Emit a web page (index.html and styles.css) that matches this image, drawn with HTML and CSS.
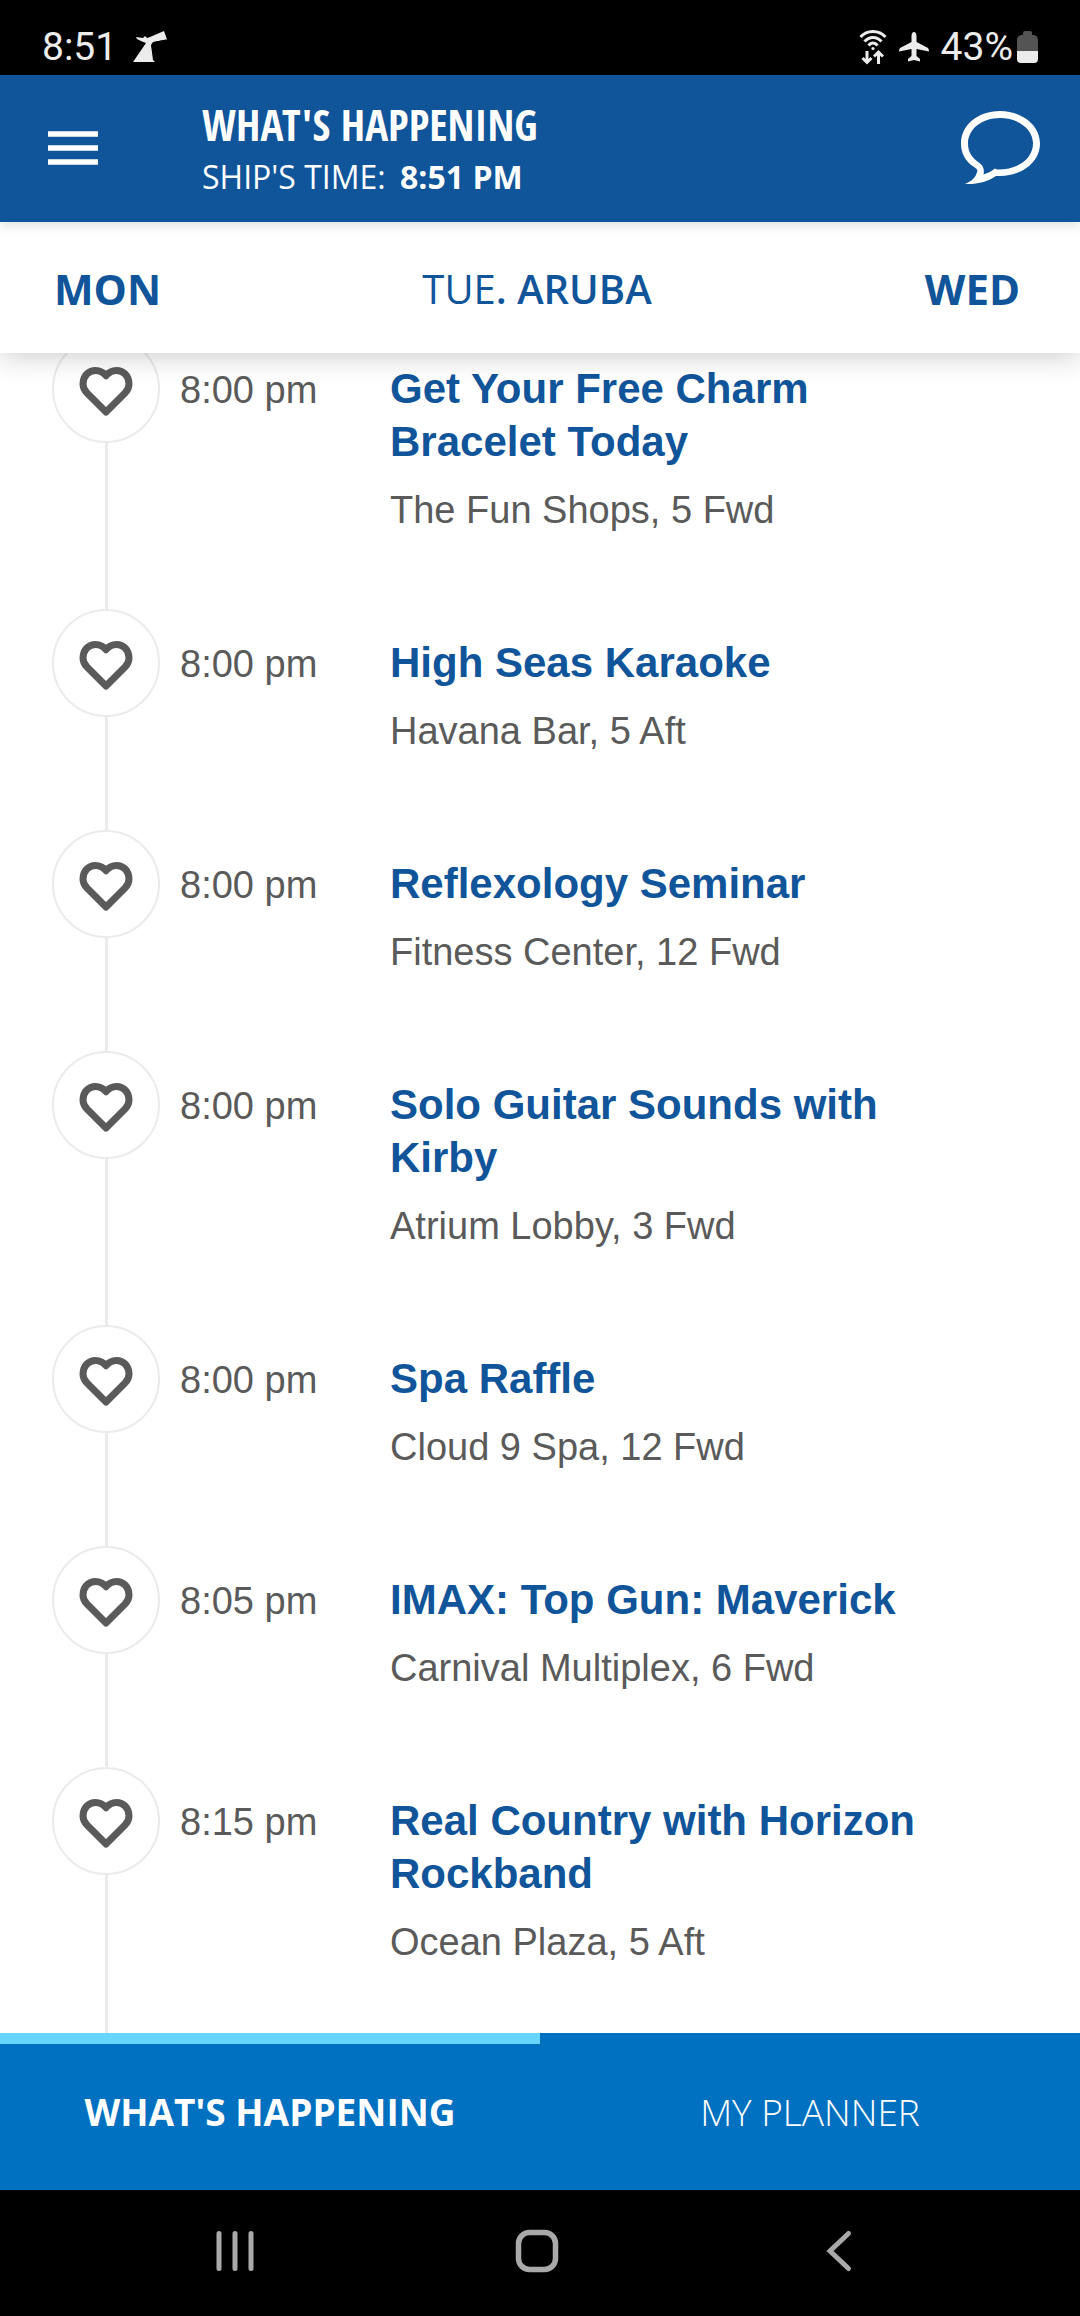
FILE: index.html
```html
<!DOCTYPE html>
<html lang="en">
  <head>
    <meta charset="UTF-8" />
    <meta name="viewport" content="width=device-width, initial-scale=1" />
    <title>What's Happening</title>
    <link rel="stylesheet" href="styles.css">
  </head>
  <body>
    <svg class="sprite" aria-hidden="true">
      <symbol id="heart" viewBox="0 0 54 52">
        <path d="M27 46 L8 27 C5.5 24.5 4 21.5 4 18 C4 10 9.5 4.5 16.500 4.500 C20.500 4.500 24.500 6.500 27 9.700 C29.500 6.500 33.500 4.500 37.500 4.500 C44.500 4.500 50 10 50 18 C50 21.500 48.500 24.500 46 27 Z" fill="none" stroke="#5a5a5a" stroke-width="7" stroke-linejoin="round" />
      </symbol>
    </svg>

    <div class="status-bar">
      <span>8:51</span>
      <svg class="funnel" width="35" height="32" viewBox="0 0 35 32">
        <path d="M0 31 L13 12 L9 10.500 L4 8 L3 6 L10 7 L12 5 L14 7 L17 6 L31 0 L34 8.500 L20 11 L18 14 L20 29 L22 31 Z" fill="#ececec" />
        <path d="M33 9 L21 11.500 L19 15 L21.500 30" fill="none" stroke="#000" stroke-width="1" />
      </svg>
      <div class="status-icons">
        <svg width="28" height="36" viewBox="0 0 28 36" fill="none" stroke="#ececec" stroke-width="3">
          <path d="M1.500 8 C8 0.500 20 0.500 26.500 8" />
          <path d="M5.500 12.500 C10 7 18 7 22.500 12.500" />
          <path d="M9.500 16.500 C12 13.200 16 13.200 18.500 16.500" />
          <circle cx="14" cy="19.500" r="1.600" fill="#ececec" stroke="none" />
          <path d="M8 22 V33 M3.500 29 L8 33.500 L12.500 29 M19.500 35 V24 M15 27.500 L19.500 23 L24 27.500" />
        </svg>
        <svg width="30" height="30" viewBox="0 0 30 30">
          <path d="M15 0 C16.500 0 17.500 2 17.500 4 V10 L29 16 Q30 17 30 19.500 L17.500 17 V24 L21 27 V29.500 L15 28 L9 29.500 V27 L12.500 24 V17 L0 19.500 Q0 17 1 16 L12.500 10 V4 C12.500 2 13.500 0 15 0 Z" fill="#ececec" />
        </svg>
        <span>43%</span>
        <svg class="battery" width="21" height="32" viewBox="0 0 21 32">
          <path d="M6 4 V2 Q6 0 8 0 H13 Q15 0 15 2 V4 H17 Q21 5 21 9 V20 H0 V9 Q0 5 4 4 Z" fill="#545454" />
          <path d="M0 20 H21 V28 Q21 32 17 32 H4 Q0 32 0 28 Z" fill="#ececec" />
        </svg>
      </div>
    </div>

    <header class="app-header">
      <button class="icon-button" aria-label="Menu">
        <svg width="50" height="34" viewBox="0 0 50 34">
          <path d="M0 3 H50 M0 17 H50 M0 31 H50" stroke="#fff" stroke-width="5.500" />
        </svg>
      </button>
      <div class="heading">
        <h1>WHAT'S HAPPENING</h1>
        <p>SHIP'S TIME: <strong>8:51 PM</strong></p>
      </div>
      <button class="icon-button" aria-label="Chat">
        <svg width="80" height="74" viewBox="0 0 80 74">
          <path fill-rule="evenodd" fill="#fff" d="M40 0 C62 0 80 14 80 32.500 C80 51 62 65 40 65 H36 C28 70.500 18 73.500 5 73 C12 70 16 66 17 61 C18 59 17 58 14 56 C5 50 1 42 1 32.500 C1 14 18 0 40 0 Z M40 7 C22 7 8 18 8 32.500 C8 41 12 47 19.500 52 C23.500 55 24.500 59 23.500 63.500 C28 62 32 60 35 57.500 L37 58.500 C58 59 73 47.500 73 32.500 C73 18 58 7 40 7 Z" />
        </svg>
      </button>
    </header>

    <nav class="days">
      <a href="#mon">MON</a>
      <a href="#tue" class="current"><span>TUE</span>. ARUBA</a>
      <a href="#wed">WED</a>
    </nav>

    <main class="schedule">
      <ul class="events">
        <li class="event">
          <div class="rail">
            <button class="like" aria-label="Like Get Your Free Charm Bracelet Today"><svg width="54" height="52"><use href="#heart" /></svg></button>
          </div>
          <time>8:00 pm</time>
          <div class="details">
            <h2>Get Your Free Charm Bracelet Today</h2>
            <p>The Fun Shops, 5 Fwd</p>
          </div>
        </li>
        <li class="event">
          <div class="rail">
            <button class="like" aria-label="Like High Seas Karaoke"><svg width="54" height="52"><use href="#heart" /></svg></button>
          </div>
          <time>8:00 pm</time>
          <div class="details">
            <h2>High Seas Karaoke</h2>
            <p>Havana Bar, 5 Aft</p>
          </div>
        </li>
        <li class="event">
          <div class="rail">
            <button class="like" aria-label="Like Reflexology Seminar"><svg width="54" height="52"><use href="#heart" /></svg></button>
          </div>
          <time>8:00 pm</time>
          <div class="details">
            <h2>Reflexology Seminar</h2>
            <p>Fitness Center, 12 Fwd</p>
          </div>
        </li>
        <li class="event">
          <div class="rail">
            <button class="like" aria-label="Like Solo Guitar Sounds with Kirby"><svg width="54" height="52"><use href="#heart" /></svg></button>
          </div>
          <time>8:00 pm</time>
          <div class="details">
            <h2>Solo Guitar Sounds with Kirby</h2>
            <p>Atrium Lobby, 3 Fwd</p>
          </div>
        </li>
        <li class="event">
          <div class="rail">
            <button class="like" aria-label="Like Spa Raffle"><svg width="54" height="52"><use href="#heart" /></svg></button>
          </div>
          <time>8:00 pm</time>
          <div class="details">
            <h2>Spa Raffle</h2>
            <p>Cloud 9 Spa, 12 Fwd</p>
          </div>
        </li>
        <li class="event">
          <div class="rail">
            <button class="like" aria-label="Like IMAX: Top Gun: Maverick"><svg width="54" height="52"><use href="#heart" /></svg></button>
          </div>
          <time>8:05 pm</time>
          <div class="details">
            <h2>IMAX: Top Gun: Maverick</h2>
            <p>Carnival Multiplex, 6 Fwd</p>
          </div>
        </li>
        <li class="event">
          <div class="rail">
            <button class="like" aria-label="Like Real Country with Horizon Rockband"><svg width="54" height="52"><use href="#heart" /></svg></button>
          </div>
          <time>8:15 pm</time>
          <div class="details">
            <h2>Real Country with Horizon Rockband</h2>
            <p>Ocean Plaza, 5 Aft</p>
          </div>
        </li>
      </ul>
    </main>

    <nav class="tabs">
      <a href="#happening" class="active">WHAT'S HAPPENING</a>
      <a href="#planner">MY PLANNER</a>
    </nav>

    <div class="system-nav">
      <button aria-label="Recent apps">
        <svg width="44" height="44" viewBox="0 0 44 44">
          <path d="M6 4.500 V39.500 M22 4.500 V39.500 M38 4.500 V39.500" stroke="#a9a9a9" stroke-width="5" stroke-linecap="round" />
        </svg>
      </button>
      <button aria-label="Home">
        <svg width="44" height="44" viewBox="0 0 44 44">
          <rect x="3.500" y="3.500" width="37" height="37" rx="11" fill="none" stroke="#a9a9a9" stroke-width="5.500" />
        </svg>
      </button>
      <button aria-label="Back">
        <svg width="44" height="44" viewBox="0 0 44 44">
          <path d="M31.500 4.500 L13 22 L31.500 39.500" fill="none" stroke="#a9a9a9" stroke-width="5" stroke-linecap="round" />
        </svg>
      </button>
    </div>
  </body>
</html>
```
FILE: styles.css
```css
* {
  box-sizing: border-box;
}

body {
  margin: 0;
  height: 100vh;
  display: flex;
  flex-direction: column;
  background: #fff;
  font-family: "Open Sans", sans-serif;
}

h1,
h2,
p,
ul {
  margin: 0;
  padding: 0;
}

button {
  padding: 0;
  border: none;
  background: none;
  cursor: pointer;
}

a {
  text-decoration: none;
}

svg {
  display: block;
}

.sprite {
  display: none;
}

/* status bar */
.status-bar {
  display: flex;
  align-items: center;
  gap: 16px;
  height: 75px;
  padding: 18px 42px 0 42px;
  background: #000;
  color: #ececec;
  font-family: Roboto, sans-serif;
  font-size: 39px;
  font-weight: 400;
}

.status-icons {
  display: flex;
  align-items: center;
  gap: 12px;
  margin-left: auto;
}

.battery {
  margin-left: -8px;
}

/* header */
.app-header {
  position: relative;
  z-index: 3;
  display: flex;
  align-items: center;
  height: 147px;
  padding: 0 40px 2px 48px;
  background: #10549a;
  color: #fff;
  box-shadow: 0 2px 12px rgba(0, 0, 0, 0.15);
}

.heading {
  flex: 1;
  padding: 4px 0 0 104px;
}

.heading h1 {
  font-family: "Open Sans Condensed", "Open Sans", sans-serif;
  font-size: 43px;
  font-weight: 900;
  line-height: 54px;
}

.heading p {
  font-size: 32px;
  line-height: 50px;
}

.heading strong {
  margin-left: 6px;
}

/* day switcher */
.days {
  position: relative;
  z-index: 2;
  display: grid;
  grid-template-columns: 1fr auto 1fr;
  align-items: center;
  height: 131px;
  padding: 2px 60px 0 54px;
  background: #fff;
  box-shadow: 0 2px 28px rgba(0, 0, 0, 0.22);
}

.days a {
  color: #10549a;
  font-size: 42px;
  font-weight: 700;
}

.days a:last-child {
  text-align: right;
}

.days .current {
  font-size: 40px;
  font-weight: 600;
}

.days .current span {
  font-weight: 400;
}

/* event list */
.schedule {
  flex: 1;
  min-height: 0;
  overflow: hidden;
  font-family: "Liberation Sans", Arial, sans-serif;
}

.events {
  list-style: none;
  margin-top: -18px;
}

.event {
  display: grid;
  grid-template-columns: 108px 190px 1fr;
  column-gap: 20px;
  padding: 0 100px 0 52px;
}

.rail {
  display: flex;
  flex-direction: column;
  align-items: center;
}

.rail::after {
  content: "";
  flex: 1;
  width: 3px;
  background: #ebebeb;
}

.like {
  display: flex;
  align-items: center;
  justify-content: center;
  width: 108px;
  height: 108px;
  padding-top: 6px;
  border: 2px solid #ebebeb;
  border-radius: 50%;
}

.event time {
  padding-top: 29px;
  color: #5a5a5a;
  font-size: 38px;
  line-height: 53px;
}

.details {
  padding: 27px 0 75px;
}

.details h2 {
  color: #10549a;
  font-size: 42px;
  line-height: 53px;
}

.details p {
  margin-top: 18px;
  color: #5a5a5a;
  font-size: 38px;
  line-height: 48px;
}

/* bottom tabs */
.tabs {
  display: grid;
  grid-template-columns: 1fr 1fr;
  height: 157px;
  background: #0070c0;
}

.tabs a {
  display: flex;
  align-items: center;
  justify-content: center;
  border-top: 11px solid transparent;
  padding-bottom: 12px;
  color: #fff;
  font-size: 37px;
  font-weight: 300;
}

.tabs .active {
  border-top-color: #66d5ff;
  font-weight: 700;
}

/* system navigation */
.system-nav {
  display: grid;
  grid-template-columns: repeat(3, 1fr);
  height: 126px;
  padding: 0 90px 4px 84px;
  background: #000;
}

.system-nav button {
  display: flex;
  align-items: center;
  justify-content: center;
}
```
